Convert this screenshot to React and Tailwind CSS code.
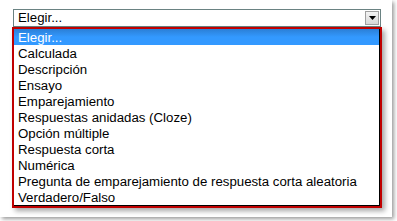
import React from 'react';

const options = [
  'Elegir...',
  'Calculada',
  'Descripción',
  'Ensayo',
  'Emparejamiento',
  'Respuestas anidadas (Cloze)',
  'Opción múltiple',
  'Respuesta corta',
  'Numérica',
  'Pregunta de emparejamiento de respuesta corta aleatoria',
  'Verdadero/Falso',
];

export default function App() {
  return (
    <div className="w-[397px] h-[221px] bg-white overflow-hidden" style={{ fontFamily: '"Liberation Sans", Arial, sans-serif' }}>
      <div className="w-[392px] h-[217px] bg-white shadow-[2px_2px_4px_rgba(0,0,0,0.4)] pt-[9px] pl-[12px]">
        {/* Select */}
        <div className="ml-[1px] w-[368px] h-[18px] border border-[#6a8282] bg-white flex items-center justify-between pl-[4px] pr-[1px]">
          <span className="text-[13.25px] leading-none text-black">Elegir...</span>
          <div className="w-[14px] h-[14px] bg-gradient-to-b from-[#f4f4f4] to-[#d8d8d8] border border-[#a0a0a0] flex items-center justify-center">
            <svg width="7" height="4" viewBox="0 0 7 4">
              <path d="M0 0h7L3.5 4z" fill="#000" />
            </svg>
          </div>
        </div>

        {/* Open list */}
        <div className="w-[370px] border-2 border-[#c00000] shadow-[3px_3px_5px_rgba(0,0,0,0.35)]">
          <ul className="border-r border-b border-black bg-white">
            {options.map((o, i) => (
              <li
                key={o}
                className={
                  i === 0
                    ? 'h-[16px] pl-[4px] text-[13.25px] leading-[17px] text-white bg-gradient-to-b from-[#2b7fd6] via-[#3399ff] to-[#3399ff]'
                    : 'h-[16px] pl-[4px] text-[13.25px] leading-[17px] text-black'
                }
              >
                {o}
              </li>
            ))}
          </ul>
        </div>
      </div>
    </div>
  );
}
